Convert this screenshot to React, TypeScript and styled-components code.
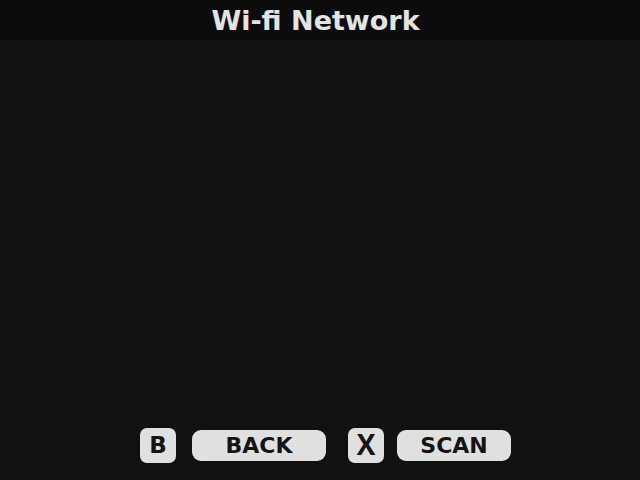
import React from "react";
import styled, { createGlobalStyle } from "styled-components";

const Global = createGlobalStyle`
  html, body { margin: 0; padding: 0; background: #111111; }
  #root { width: 640px; height: 480px; }
`;

const Screen = styled.div`
  width: 640px;
  height: 480px;
  background: #111111;
  display: flex;
  flex-direction: column;
  font-family: "DejaVu Sans", "Noto Sans", sans-serif;
  overflow: hidden;
`;

const Header = styled.div`
  height: 40px;
  background: #0c0c0c;
  display: flex;
  align-items: center;
  justify-content: center;
  padding-right: 9px;
`;

const Title = styled.h1`
  margin: 0;
  font-size: 27px;
  font-weight: 700;
  color: #e3e3e3;
  line-height: 40px;
  padding-top: 1px;
`;

const Body = styled.div`
  flex: 1;
`;

const Footer = styled.div`
  display: flex;
  align-items: center;
  padding: 0 0 17px 140px;
`;

const Key = styled.div<{ $alt?: boolean }>`
  width: 36px;
  height: 35px;
  border-radius: 7px;
  background: #e0e0e0;
  color: #141414;
  font-weight: 700;
  font-family: ${(p) => (p.$alt ? '"Open Sans", sans-serif' : '"DejaVu Sans", sans-serif')};
  font-size: ${(p) => (p.$alt ? 28 : 23)}px;
  line-height: 1;
  display: flex;
  align-items: center;
  justify-content: center;
  padding-bottom: ${(p) => (p.$alt ? 4 : 0)}px;
  box-sizing: border-box;
`;

const Pill = styled.div<{ $w: number; $gap: number }>`
  width: ${(p) => p.$w}px;
  height: 31px;
  margin-left: ${(p) => p.$gap}px;
  border-radius: 9px;
  background: #e0e0e0;
  color: #141414;
  font-weight: 700;
  font-size: 22px;
  display: flex;
  align-items: center;
  justify-content: center;
  box-sizing: border-box;
  padding-bottom: 1px;
`;

const Group = styled.div<{ $gap: number }>`
  display: flex;
  align-items: center;
  margin-left: ${(p) => p.$gap}px;
`;

export default function App() {
  return (
    <Screen>
      <Global />
      <Header>
        <Title>Wi-fi Network</Title>
      </Header>
      <Body />
      <Footer>
        <Group $gap={0}>
          <Key>B</Key>
          <Pill $w={134} $gap={16}>BACK</Pill>
        </Group>
        <Group $gap={22}>
          <Key $alt>X</Key>
          <Pill $w={114} $gap={13}>SCAN</Pill>
        </Group>
      </Footer>
    </Screen>
  );
}
